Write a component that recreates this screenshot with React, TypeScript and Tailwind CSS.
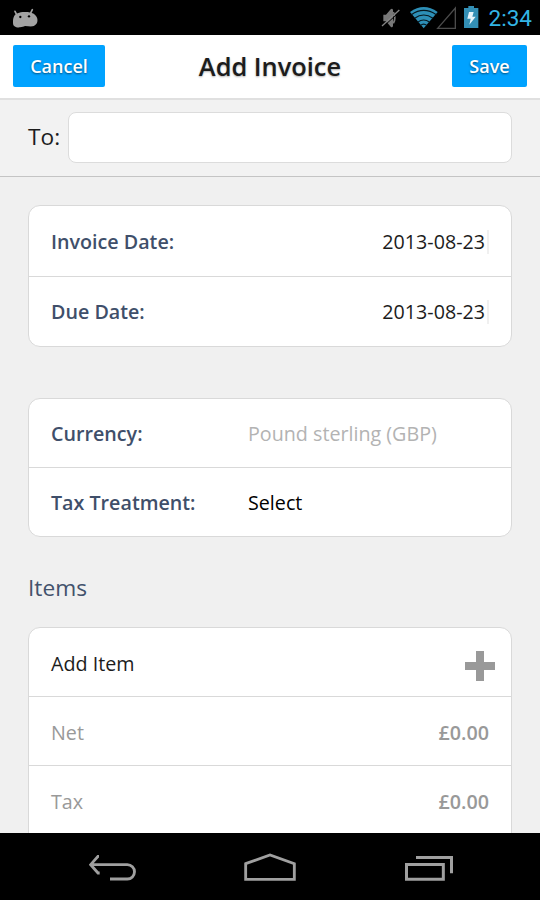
import React, { useState } from 'react';

interface RowProps {
  label: string;
  labelClass: string;
  className: string;
  children?: React.ReactNode;
}

const labelBlue = 'w-[197px] font-semibold text-[#3f4f6a]';
const labelGray = 'flex-1 text-[#999]';

const AndroidIcon = () => (
  <svg className="h-5 w-[26px]" viewBox="36 22 78 60">
    <path d="M45 32l6 12M97 27l-6 12" stroke="#a3a3a3" strokeWidth="5" strokeLinecap="round" />
    <path
      d="M41 50c3-12 18-16 32-16 20-1 35 5 39 20 2 12-4 20-14 23-8 1-15-1-23-1-5 2-8 3-15 4-13 1-21-3-21-14 0-7 0-10 2-16z"
      fill="#a3a3a3"
    />
    <circle cx="61" cy="49" r="3.5" fill="#000" />
    <circle cx="87" cy="47" r="3.5" fill="#000" />
  </svg>
);

const StatusIcons = () => (
  <svg className="h-[25px] w-[100px]" viewBox="30 15 300 75" fill="none">
    {/* muted speaker */}
    <path d="M40 44h8l14-16q5-5 7 2v48q-2 7-7 2L48 64h-8z" fill="#787878" />
    <path d="M70 36q9 18 0 34" stroke="#787878" strokeWidth="5" />
    <path d="M40 80L92 32" stroke="#000" strokeWidth="3" />
    <path d="M36 78L88 30" stroke="#858585" strokeWidth="4" />
    {/* wifi */}
    <path d="M120 36Q161 6 203 36L161 85z" fill="#2d8fb7" />
    <path d="M124 44Q161 18 199 44M134 55Q161 35 189 55M143 67Q161 53 179 67M151 77Q161 68 171 77" stroke="#051820" strokeWidth="3.5" />
    {/* cell signal */}
    <path d="M203 85L256 24V85z" stroke="#4b4b4b" strokeWidth="4" />
    {/* battery */}
    <path d="M282 24h13v-6h17v6h13v60h-43z" fill="#338fb5" />
    <path d="M297 36h14l-4 14h10l-19 24 4-18h-10z" fill="#e6f4fa" />
  </svg>
);

const StatusBar = () => (
  <div className="flex h-[35px] shrink-0 items-center bg-black pl-3 pr-[8px]">
    <AndroidIcon />
    <div className="ml-auto flex items-center gap-[9px]">
      <StatusIcons />
      <span className="pt-px font-['Roboto',sans-serif] text-[22.5px] leading-none text-[#33b5e5]">2:34</span>
    </div>
  </div>
);

const NavBar = () => (
  <div className="flex h-[67px] shrink-0 items-end bg-black pb-[19px] pl-[89px]">
    <svg className="h-[26px] w-[47px]" viewBox="57 105 141 78" fill="none" stroke="#a0a0a0" strokeWidth="8.5">
      <path d="M64 134H172a21.5 21.5 0 0 1 0 43H120M87 109H84L62 134l22 25h5" />
    </svg>
    <svg className="ml-[108px] h-7 w-[52px]" viewBox="522 99 156 84" fill="none" stroke="#a0a0a0" strokeWidth="8.5">
      <path d="M527 131L600 105l73 26v47H527z" />
    </svg>
    <svg className="ml-[109px] h-[26px] w-12" viewBox="1005 105 144 78" fill="none" stroke="#a0a0a0" strokeWidth="9">
      <path d="M1009.500 133.500H1120V178H1009.500zM1038 112.500H1144.500V160" />
    </svg>
  </div>
);

const Row = ({ label, labelClass, className, children }: RowProps) => (
  <div className={`flex items-center border-[#d9d9d9] pl-[22px] pr-[22px] ${className}`}>
    <span className={labelClass}>{label}</span>
    {children}
  </div>
);

const App = () => {
  const [to, setTo] = useState('');

  return (
    <div className="flex h-[900px] w-[540px] flex-col overflow-hidden bg-[#f0f0f0] font-['Open_Sans',sans-serif] text-[19.7px] text-[#1c1c1c]">
      <StatusBar />

      <header className="flex h-[65px] shrink-0 items-start justify-between border-b-2 border-[#e0e0e0] bg-white px-[13px] pt-[10px]">
        <button className="h-[42px] w-[92px] rounded-[2px] bg-[#00a2ff] text-[18px] font-semibold text-white [text-shadow:0_1px_2px_rgba(0,0,0,0.5)]">
          Cancel
        </button>
        <h1 className="pr-[17px] text-[25.4px] leading-[43px] font-semibold [text-shadow:0_1px_2px_rgba(0,0,0,0.3)]">Add Invoice</h1>
        <button className="h-[42px] w-[75px] rounded-[2px] bg-[#00a2ff] text-[18px] font-semibold text-white [text-shadow:0_1px_2px_rgba(0,0,0,0.5)]">
          Save
        </button>
      </header>

      <div className="flex h-[77px] shrink-0 items-start border-b border-[#c4c4c4] bg-[#f2f2f2] pt-3 pl-7">
        <label htmlFor="to" className="w-10 text-[22.7px] leading-[49px]">To:</label>
        <input
          id="to"
          value={to}
          onChange={(e) => setTo(e.target.value)}
          className="h-[51px] w-[444px] rounded-[8px] border border-[#dcdcdc] bg-white px-3 outline-none"
        />
      </div>

      <main className="flex min-h-0 flex-1 flex-col overflow-hidden px-7">
        <section className="mt-[28px] h-[142px] shrink-0 rounded-[12px] border border-[#d9d9d9] bg-white">
          <Row label="Invoice Date:" labelClass={labelBlue} className="h-[71px] border-b pt-[2px]">
            <span className="ml-auto">2013-08-23</span>
            <span className="ml-[2px] h-6 w-[2px] bg-[#f0f0f0]" />
          </Row>
          <Row label="Due Date:" labelClass={labelBlue} className="h-[69px] pt-px">
            <span className="ml-auto">2013-08-23</span>
            <span className="ml-[2px] h-6 w-[2px] bg-[#f0f0f0]" />
          </Row>
        </section>

        <section className="mt-[51px] h-[139px] shrink-0 rounded-[12px] border border-[#d9d9d9] bg-white">
          <Row label="Currency:" labelClass={labelBlue} className="h-[69px] border-b pt-[2px]">
            <span className="text-[#b3b3b3]">Pound sterling (GBP)</span>
          </Row>
          <Row label="Tax Treatment:" labelClass={labelBlue} className="h-[68px] pt-[2px]">
            <span className="text-black">Select</span>
          </Row>
        </section>

        <h2 className="mt-[33px] h-[57px] shrink-0 text-[22.7px] leading-[36px] text-[#43526c]">Items</h2>

        <section className="h-[280px] shrink-0 rounded-[12px] border border-[#d9d9d9] bg-white">
          <Row label="Add Item" labelClass="flex-1" className="h-[69px] border-b pt-[3px]">
            <svg className="mt-[5px] -mr-[6px] h-[30px] w-[30px]" viewBox="0 0 30 30" fill="#999">
              <path d="M11 0h8v11h11v8H19v11h-8V19H0v-8h11z" />
            </svg>
          </Row>
          <Row label="Net" labelClass={labelGray} className="h-[69px] border-b pt-[3px]">
            <span className="font-semibold text-[#999]">£0.00</span>
          </Row>
          <Row label="Tax" labelClass={labelGray} className="h-[69px] border-b pt-[3px]">
            <span className="font-semibold text-[#999]">£0.00</span>
          </Row>
        </section>
      </main>

      <NavBar />
    </div>
  );
};

export default App;
